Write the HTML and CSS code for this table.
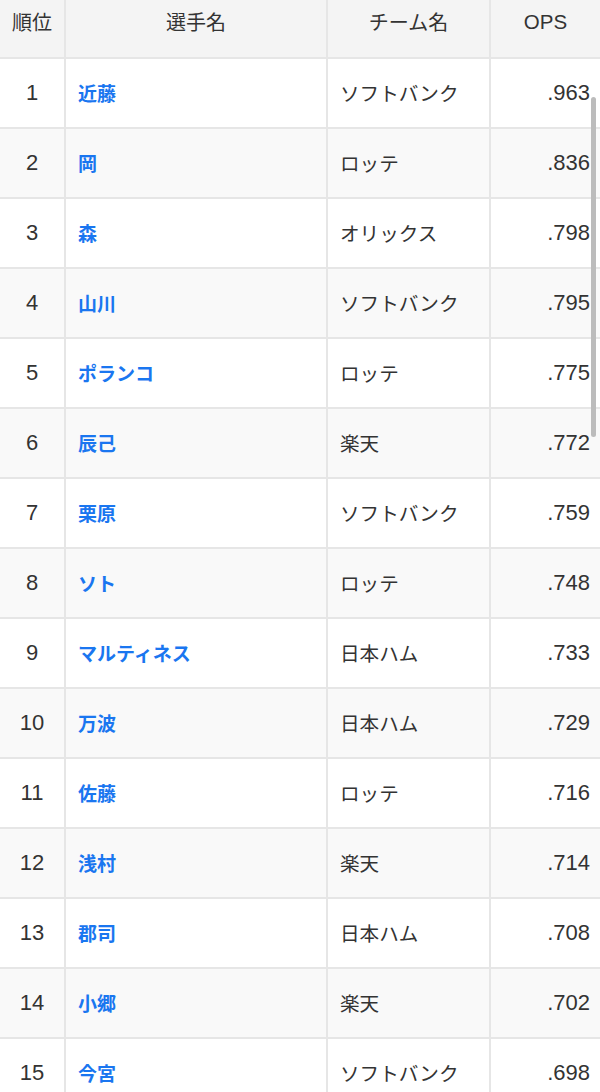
FILE: index.html
```html
<!DOCTYPE html>
<html lang="ja">
<head>
<meta charset="utf-8">
<title>OPS ランキング</title>
<link rel="stylesheet" href="styles.css">
</head>
<body>
<div class="wrap">
<table class="rank">
<colgroup>
<col class="c-rank"><col class="c-name"><col class="c-team"><col class="c-ops">
</colgroup>
<thead>
<tr><th>順位</th><th>選手名</th><th>チーム名</th><th class="h-ops">OPS</th></tr>
</thead>
<tbody>
<tr><td class="num">1</td><td class="name"><a>近藤</a></td><td class="team">ソフトバンク</td><td class="ops">.963</td></tr>
<tr><td class="num">2</td><td class="name"><a>岡</a></td><td class="team">ロッテ</td><td class="ops">.836</td></tr>
<tr><td class="num">3</td><td class="name"><a>森</a></td><td class="team">オリックス</td><td class="ops">.798</td></tr>
<tr><td class="num">4</td><td class="name"><a>山川</a></td><td class="team">ソフトバンク</td><td class="ops">.795</td></tr>
<tr><td class="num">5</td><td class="name"><a>ポランコ</a></td><td class="team">ロッテ</td><td class="ops">.775</td></tr>
<tr><td class="num">6</td><td class="name"><a>辰己</a></td><td class="team">楽天</td><td class="ops">.772</td></tr>
<tr><td class="num">7</td><td class="name"><a>栗原</a></td><td class="team">ソフトバンク</td><td class="ops">.759</td></tr>
<tr><td class="num">8</td><td class="name"><a>ソト</a></td><td class="team">ロッテ</td><td class="ops">.748</td></tr>
<tr><td class="num">9</td><td class="name"><a>マルティネス</a></td><td class="team">日本ハム</td><td class="ops">.733</td></tr>
<tr><td class="num">10</td><td class="name"><a>万波</a></td><td class="team">日本ハム</td><td class="ops">.729</td></tr>
<tr><td class="num">11</td><td class="name"><a>佐藤</a></td><td class="team">ロッテ</td><td class="ops">.716</td></tr>
<tr><td class="num">12</td><td class="name"><a>浅村</a></td><td class="team">楽天</td><td class="ops">.714</td></tr>
<tr><td class="num">13</td><td class="name"><a>郡司</a></td><td class="team">日本ハム</td><td class="ops">.708</td></tr>
<tr><td class="num">14</td><td class="name"><a>小郷</a></td><td class="team">楽天</td><td class="ops">.702</td></tr>
<tr><td class="num">15</td><td class="name"><a>今宮</a></td><td class="team">ソフトバンク</td><td class="ops">.698</td></tr>
</tbody>
</table>
<div class="scrollbar"></div>
</div>
</body>
</html>
```
FILE: styles.css
```css
html, body {
  margin: 0;
  padding: 0;
  background: #fff;
}
body {
  font-family: "Liberation Sans", "Noto Sans CJK JP", sans-serif;
  color: #333;
  overflow: hidden;
  height: 1092px;
}
.wrap {
  position: relative;
  width: 600px;
}
.rank {
  width: 600px;
  table-layout: fixed;
  border-collapse: separate;
  border-spacing: 0;
  font-size: 20px;
}
.c-rank { width: 66px; }
.c-name { width: 262px; }
.c-team { width: 163px; }
.c-ops { width: 109px; }
.rank th, .rank td {
  border-right: 2px solid #e6e6e6;
  border-bottom: 2px solid #e6e6e6;
  padding: 0;
}
.rank th:last-child, .rank td:last-child {
  border-right: none;
}
.rank th {
  background: #f4f4f4;
  font-weight: 400;
  box-sizing: border-box;
  height: 59px;
  padding-top: 8px;
  vertical-align: top;
  line-height: 28px;
  text-align: center;
  font-family: "Noto Sans CJK JP", sans-serif;
}
.rank th.h-ops {
  font-family: "Liberation Sans", sans-serif;
  font-size: 20.5px;
}
.rank td {
  height: 68px;
  line-height: 28px;
  vertical-align: middle;
}
.rank tbody tr:nth-child(even) td {
  background: #f9f9f9;
}
.num {
  text-align: center;
  font-size: 22px;
}
.name {
  padding-left: 12px !important;
}
.name a {
  color: #1a76f0;
  font-weight: 700;
  font-size: 19px;
  font-family: "Noto Sans CJK JP", sans-serif;
}
.team {
  padding-left: 12px !important;
  font-family: "Noto Sans CJK JP", sans-serif;
  font-size: 19.6px;
  font-weight: 400;
}
.ops {
  text-align: right;
  font-size: 22px;
  padding-right: 10px !important;
}
.scrollbar {
  position: absolute;
  left: 591px;
  top: 97px;
  width: 5px;
  height: 340px;
  border-radius: 3px;
  background: #bcbcbc;
}
```
